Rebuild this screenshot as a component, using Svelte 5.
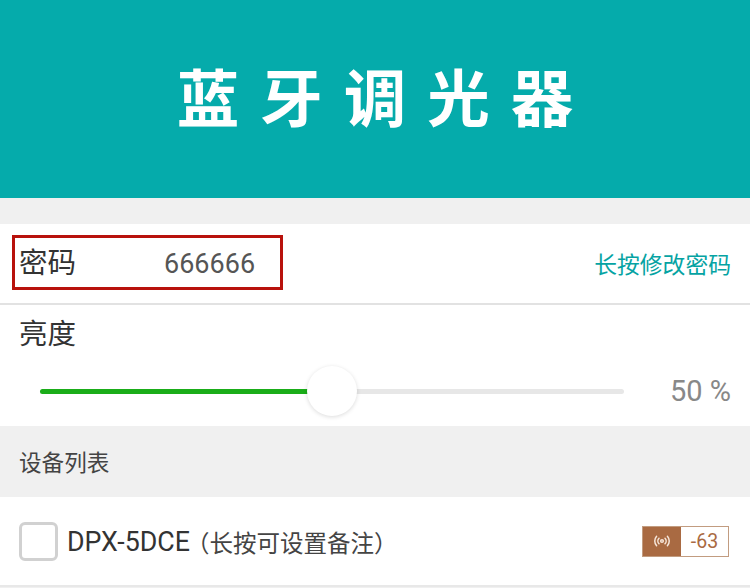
<script>
  let brightness = $state(50);
  const devices = [{ name: "DPX-5DCE", note: "（长按可设置备注）", rssi: -63 }];
</script>

<div class="page">
  <header class="banner">蓝牙调光器</header>

  <section class="password-row">
    <div class="password-box">
      <span class="label">密码</span>
      <span class="value">666666</span>
    </div>
    <span class="change-link">长按修改密码</span>
  </section>

  <section class="brightness">
    <div class="label">亮度</div>
    <div class="slider-row">
      <div class="track">
        <div class="track-fill" style="width: {brightness}%"></div>
        <div class="thumb" style="left: {brightness}%"></div>
      </div>
      <span class="percent">{brightness} %</span>
    </div>
  </section>

  <div class="list-title">设备列表</div>

  {#each devices as device}
    <div class="device">
      <div class="checkbox"></div>
      <span class="device-name">{device.name}</span>
      <span class="device-note">{device.note}</span>
      <div class="signal">
        <div class="signal-icon">
          <svg width="18" height="12" viewBox="0 0 18 12" fill="none" stroke="#f6e6da" stroke-width="1.5" stroke-linecap="round">
            <circle cx="9" cy="6" r="1.3" />
            <path d="M6 3.2a4 4 0 0 0 0 5.6" />
            <path d="M12 3.2a4 4 0 0 1 0 5.6" />
            <path d="M3.6 1.2a7.2 7.2 0 0 0 0 9.6" />
            <path d="M14.4 1.2a7.2 7.2 0 0 1 0 9.6" />
          </svg>
        </div>
        <div class="signal-value">{device.rssi}</div>
      </div>
    </div>
  {/each}
</div>

<style>
  :global(body) {
    margin: 0;
    background: #f0f0f0;
  }

  .page {
    width: 750px;
    height: 588px;
    overflow: hidden;
    background: #f0f0f0;
    font-family: "Noto Sans CJK SC", "Roboto", sans-serif;
    color: #333;
  }

  .banner {
    height: 198px;
    background: #05abab;
    color: #fff;
    display: flex;
    align-items: center;
    justify-content: center;
    font-size: 62.5px;
    font-weight: 700;
    letter-spacing: 21px;
    padding: 0 0 10px 21px;
    box-sizing: border-box;
  }

  .password-row {
    margin-top: 26px;
    height: 68px;
    background: #fff;
    border-bottom: 2px solid #e2e2e2;
    display: flex;
    align-items: flex-start;
    justify-content: space-between;
    padding: 11px 19px 0 12px;
  }

  .password-box {
    width: 261px;
    height: 49px;
    border: 3px solid #b8120c;
    display: flex;
    align-items: center;
    padding-left: 4px;
  }

  .label {
    font-size: 28.5px;
    line-height: 40px;
    color: #333;
  }

  .password-box .label {
    margin-top: -3px;
  }

  .value {
    font-family: "Roboto", sans-serif;
    font-size: 27px;
    color: #555;
    margin-left: 88px;
    margin-top: 3px;
  }

  .change-link {
    font-size: 22.8px;
    color: #05a3a3;
    margin-top: 12px;
  }

  .brightness {
    height: 121px;
    background: #fff;
    padding: 7px 19px 0;
    box-sizing: border-box;
  }

  .slider-row {
    display: flex;
    align-items: center;
    margin-top: 22px;
    padding-left: 21px;
  }

  .track {
    position: relative;
    width: 584px;
    height: 5px;
    border-radius: 3px;
    background: #e7e7e7;
  }

  .track-fill {
    height: 100%;
    border-radius: 3px;
    background: #1aad19;
  }

  .thumb {
    position: absolute;
    top: 50%;
    width: 50px;
    height: 50px;
    border-radius: 50%;
    background: #fff;
    transform: translate(-50%, -50%);
    box-shadow: 0 1px 4px rgba(0, 0, 0, 0.14);
  }

  .percent {
    margin-left: auto;
    font-family: "Roboto", sans-serif;
    font-size: 29px;
    color: #888;
  }

  .list-title {
    height: 71px;
    display: flex;
    align-items: center;
    padding-left: 19px;
    font-size: 22.6px;
    color: #444;
  }

  .device {
    height: 90px;
    background: #fff;
    border-bottom: 2px solid #e8e8e8;
    display: flex;
    align-items: center;
    padding: 0 21px 0 19px;
    box-sizing: border-box;
  }

  .checkbox {
    width: 33px;
    height: 33px;
    border: 3px solid #d1d1d1;
    border-radius: 6px;
    margin-right: 9px;
  }

  .device-name {
    font-family: "Roboto", sans-serif;
    font-size: 26.8px;
    color: #333;
    padding-top: 2px;
  }

  .device-note {
    font-size: 23.5px;
    color: #444;
    margin-left: -4px;
    padding-top: 2px;
  }

  .signal {
    margin-left: auto;
    display: flex;
    width: 87px;
    height: 31px;
    border: 1px solid #c29c80;
    box-sizing: border-box;
  }

  .signal-icon {
    width: 38px;
    background: #a96a42;
    display: flex;
    align-items: center;
    justify-content: center;
  }

  .signal-value {
    flex: 1;
    background: #fff;
    color: #a96a42;
    font-family: "Roboto", sans-serif;
    font-size: 19.5px;
    display: flex;
    align-items: center;
    justify-content: center;
  }
</style>
